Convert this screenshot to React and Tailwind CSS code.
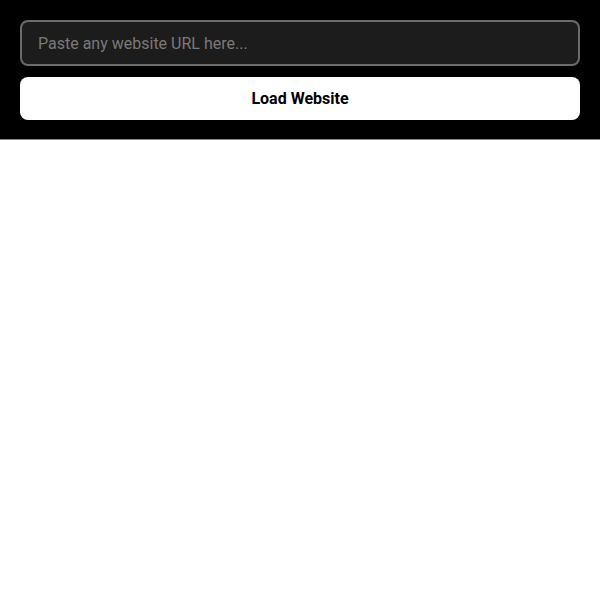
import React from "react";

export default function App() {
  return (
    <div className="min-h-screen bg-white" style={{ fontFamily: "Roboto, 'Liberation Sans', sans-serif" }}>
      <div className="bg-black px-5 pt-5 pb-[19px] border-b border-[#8a8a8a] flex flex-col gap-[11px]">
        <input
          autoFocus
          type="text"
          placeholder="Paste any website URL here..."
          className="w-full h-[46px] rounded-lg border-2 border-[#6b6b6b] bg-[#1c1c1c] px-4 text-base text-white placeholder:text-[#7a7a7a] outline-none caret-white"
        />
        <button className="w-full h-[43px] rounded-lg bg-white text-black text-base font-bold">
          Load Website
        </button>
      </div>
    </div>
  );
}
